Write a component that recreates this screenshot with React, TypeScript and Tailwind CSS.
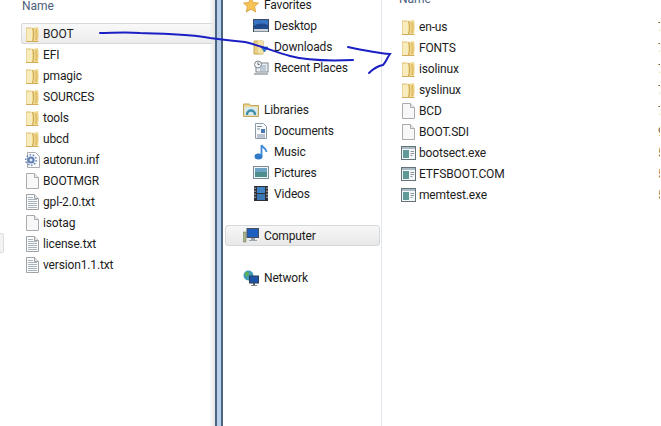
import type { ReactNode } from 'react';

function FolderIcon() {
  return (
    <svg width="13" height="16" viewBox="0 0 13 16" className="shrink-0">
      <path d="M0 1.5 h5 l1 1 h6 v12.5 h-12 z" fill="#dcbf70" />
      <path d="M0.5 2.5 h6 v12.5 h-6 z" fill="#f8ecbd" />
      <path d="M6 2 l6 -1 c1 4 1 9 0 14 h-6 z" fill="#f0d993" />
      <path d="M6.5 2 c1.6 4 1.6 8.5 0 13" stroke="#c9a654" strokeWidth="1" fill="none" />
      <path d="M0 15.5 h12.5" stroke="#d0ae5e" strokeWidth="1" />
      <path d="M10 3 c0.8 4 0.8 8 0 11" stroke="#e0c06a" strokeWidth="2" fill="none" />
    </svg>
  );
}

function BlankIcon() {
  return (
    <svg width="13" height="16" viewBox="0 0 13 16" className="shrink-0">
      <path d="M0.5 0.5 h8 l4 4 v11 h-12 z" fill="#f8f8f8" stroke="#a8acb0" />
      <path d="M8.5 0.5 v4 h4" fill="#ebebeb" stroke="#a8acb0" />
    </svg>
  );
}

function TextIcon() {
  return (
    <svg width="13" height="16" viewBox="0 0 13 16" className="shrink-0">
      <path d="M0.5 0.5 h8 l4 4 v11 h-12 z" fill="#fafafa" stroke="#9ea3a8" />
      <path d="M8.5 0.5 v4 h4" fill="#e8e8e8" stroke="#9ea3a8" />
      <path d="M2 3.5 h5 M2 5.5 h9 M2 7.5 h9 M2 9.5 h9 M2 11.5 h9 M2 13.5 h9" stroke="#a9b3bd" strokeWidth="1" />
    </svg>
  );
}

function InfIcon() {
  return (
    <svg width="15" height="16" viewBox="0 0 15 16" className="shrink-0">
      <path d="M2.5 0.5 h8 l4 4 v11 h-12 z" fill="#fafafa" stroke="#a9adb2" />
      <circle cx="6" cy="8" r="3.6" fill="#5f7fb5" />
      <circle cx="6" cy="8" r="5.2" fill="none" stroke="#6f8cbd" strokeWidth="1.6" strokeDasharray="1.6 1.6" />
      <circle cx="6" cy="8" r="1.5" fill="#dfe8f5" />
    </svg>
  );
}

function ExeIcon() {
  return (
    <svg width="15" height="14" viewBox="0 0 15 14" className="shrink-0">
      <rect x="0.5" y="0.5" width="14" height="13" fill="#f4f6f7" stroke="#64727a" />
      <rect x="1" y="1" width="13" height="2" fill="#a9bcc6" />
      <rect x="2" y="4" width="6" height="8" fill="#5f9a98" />
      <path d="M9.5 5.5 h3.5 M9.5 7.5 h3.5 M9.5 9.5 h2" stroke="#8b979e" />
    </svg>
  );
}

function StarIcon() {
  return (
    <svg width="16" height="16" viewBox="0 0 16 16" className="shrink-0">
      <path d="M8 0.5 l2.3 5 5.2 0.6 -3.9 3.5 1.1 5.4 -4.7 -2.7 -4.7 2.7 1.1 -5.4 -3.9 -3.5 5.2 -0.6 z" fill="#f6c455" stroke="#d79a3a" strokeWidth="0.8" />
    </svg>
  );
}

function DesktopIcon() {
  return (
    <svg width="16" height="13" viewBox="0 0 16 13" className="shrink-0">
      <rect x="0.5" y="0.5" width="15" height="12" fill="#3a74c4" stroke="#3a4c63" />
      <path d="M1 7 c4 -3 9 -3 14 -1 v6 h-14 z" fill="#1f4a8c" />
      <rect x="1" y="10" width="14" height="2.5" fill="#cfd5da" />
    </svg>
  );
}

function DownloadsIcon() {
  return (
    <svg width="16" height="16" viewBox="0 0 16 16" className="shrink-0">
      <path d="M1 2 h9 v13 h-9 z" fill="#e8cf85" stroke="#c7a858" />
      <path d="M5 1 l5 1 v13 l-5 -1 z" fill="#f3e2a6" />
      <path d="M8 8 h7 l-3.5 5 z" fill="#2f7fcf" stroke="#1d5c9f" strokeWidth="0.6" />
    </svg>
  );
}

function RecentIcon() {
  return (
    <svg width="16" height="16" viewBox="0 0 16 16" className="shrink-0">
      <rect x="3" y="3" width="12" height="9" fill="#eef1f4" stroke="#7d868e" />
      <circle cx="5" cy="4.5" r="3.5" fill="#f2f4f6" stroke="#7d868e" />
      <path d="M5 2.5 v2 h1.5" stroke="#566069" fill="none" />
      <path d="M7 6 h6 M7 8 h6 M7 10 h6" stroke="#8ba3bb" />
      <path d="M1 13 h14 v2 h-14 z" fill="#b3b8bd" />
    </svg>
  );
}

function LibrariesIcon() {
  return (
    <svg width="16" height="15" viewBox="0 0 16 15" className="shrink-0">
      <path d="M0.5 2 h6 l1 1.5 h8 v11 h-15 z" fill="#ecd690" stroke="#c3a65b" />
      <path d="M1.5 5 h13 v8.5 h-13 z" fill="#d8e9ef" />
      <path d="M4 13 c0 -6 8 -6 8 0" fill="none" stroke="#3f8fa8" strokeWidth="2.4" />
    </svg>
  );
}

function DocumentsIcon() {
  return (
    <svg width="14" height="16" viewBox="0 0 14 16" className="shrink-0">
      <path d="M1.5 0.5 h8 l3 3 v12 h-11 z" fill="#f8fafc" stroke="#8d9aa8" />
      <path d="M3 3.5 h5 M3 6 h3 M3 12 h8 M3 14 h8" stroke="#7c8fa6" />
      <rect x="7" y="6" width="4" height="4" fill="#4a78b5" />
    </svg>
  );
}

function MusicIcon() {
  return (
    <svg width="14" height="16" viewBox="0 0 14 16" className="shrink-0">
      <ellipse cx="4.5" cy="12.5" rx="4" ry="3" fill="#2f7bc8" />
      <path d="M7.5 12 V1 c1 3 5 3 5 7" fill="none" stroke="#3d8ad4" strokeWidth="1.8" />
    </svg>
  );
}

function PicturesIcon() {
  return (
    <svg width="16" height="13" viewBox="0 0 16 13" className="shrink-0">
      <rect x="0.5" y="0.5" width="15" height="12" fill="#f2f5f7" stroke="#7e8b95" />
      <rect x="2" y="2" width="12" height="4" fill="#6fa3c4" />
      <rect x="2" y="6" width="12" height="5" fill="#4e8f8d" />
    </svg>
  );
}

function VideosIcon() {
  return (
    <svg width="14" height="15" viewBox="0 0 14 15" className="shrink-0">
      <rect x="0" y="0" width="14" height="15" fill="#2d3036" />
      <rect x="3" y="1" width="8" height="6" fill="#3f83c4" />
      <rect x="3" y="8" width="8" height="6" fill="#3a77b3" />
      <path d="M1 1.5 v12 M13 1.5 v12" stroke="#d5d8dc" strokeWidth="1" strokeDasharray="1.5 1.5" />
    </svg>
  );
}

function ComputerIcon() {
  return (
    <svg width="16" height="15" viewBox="0 0 16 15" className="shrink-0">
      <rect x="0" y="4" width="3" height="10" fill="#a9b48a" stroke="#6f7a5c" strokeWidth="0.5" />
      <rect x="4" y="0.5" width="11.5" height="9" fill="#1f5fc0" stroke="#45515e" />
      <path d="M8 10 h4 v2 h2 v1 h-8 v-1 h2 z" fill="#9aa3ab" />
    </svg>
  );
}

function NetworkIcon() {
  return (
    <svg width="16" height="16" viewBox="0 0 16 16" className="shrink-0">
      <circle cx="5.5" cy="5.5" r="5" fill="#3f9bb8" />
      <path d="M2 3 c2 -2 4 -1 4 1 c0 2 -3 1 -3 4 z M7 8 c2 -1 3 0 3 1 l-2 1.5 z" fill="#5fb04d" />
      <rect x="6.5" y="6" width="9" height="7" fill="#1c55a8" stroke="#2f3f52" />
      <path d="M10 13 h2 v2 h2 v0.8 h-6 v-0.8 h2 z" fill="#55606b" />
    </svg>
  );
}

function Row({ icon, label, selected, date }: { icon: ReactNode; label: string; selected?: boolean; date?: string }) {
  return (
    <div
      className={
        'flex h-[21px] items-center border ' +
        (selected
          ? 'rounded-[2px] border-[#d6d9dc] bg-gradient-to-b from-[#f9f9f9] to-[#ececec]'
          : 'border-transparent')
      }
    >
      <span className="flex w-[15px] shrink-0 justify-center">{icon}</span>
      <span className="ml-[3px] grow text-[12px] tracking-[-0.15px] text-[#1c1c1c]">{label}</span>
      {date && <span className="w-[2px] overflow-hidden text-[12px] text-[#6d5a3c]">{date}</span>}
    </div>
  );
}

function NavRow({ icon, label, child, selected }: { icon: ReactNode; label: string; child?: boolean; selected?: boolean }) {
  return (
    <div
      className={
        'flex h-[21px] items-center rounded-[3px] border ' +
        (selected ? 'border-[#d5d8da] bg-gradient-to-b from-[#f7f7f7] to-[#e8e8e8] ' : 'border-transparent ') +
        (child ? 'pl-[27px]' : 'pl-[17px]')
      }
    >
      <span className="flex w-[16px] justify-center">{icon}</span>
      <span className="ml-[5px] text-[12px] tracking-[-0.15px] text-[#1c1c1c]">{label}</span>
    </div>
  );
}

export default function App() {
  return (
    <div className="relative flex h-[426px] w-[661px] overflow-hidden bg-white font-['Roboto',sans-serif]">
      {/* left file list */}
      <div className="relative w-[215px] shrink-0 pt-[23px]">
        <span className="absolute left-[22px] top-[-3px] text-[12px] text-[#4c607a]">Name</span>
        <div className="absolute left-0 top-[233px] h-[20px] w-[4px] rounded-r-[2px] border border-l-0 border-[#dcdcdc] bg-[#f3f3f3]" />
        <div className="ml-[21px] [&>div]:pl-[3px]">
          <Row icon={<FolderIcon />} label="BOOT" selected />
          <Row icon={<FolderIcon />} label="EFI" />
          <Row icon={<FolderIcon />} label="pmagic" />
          <Row icon={<FolderIcon />} label="SOURCES" />
          <Row icon={<FolderIcon />} label="tools" />
          <Row icon={<FolderIcon />} label="ubcd" />
          <Row icon={<InfIcon />} label="autorun.inf" />
          <Row icon={<BlankIcon />} label="BOOTMGR" />
          <Row icon={<TextIcon />} label="gpl-2.0.txt" />
          <Row icon={<BlankIcon />} label="isotag" />
          <Row icon={<TextIcon />} label="license.txt" />
          <Row icon={<TextIcon />} label="version1.1.txt" />
        </div>
        {/* soft shadow next to the window edge */}
        <div className="absolute right-0 top-0 h-full w-[6px] bg-gradient-to-r from-transparent to-[#e6e6e6]" />
      </div>

      {/* window edge */}
      <div className="h-full w-[8px] shrink-0 border-x-2 border-[#4d6480] bg-[#b9d0ec]" />

      {/* navigation pane */}
      <div className="w-[159px] shrink-0 border-r border-[#dfe6ee] pr-[1px]">
        <div className="ml-[2px] mt-[-6px]">
          <NavRow icon={<StarIcon />} label="Favorites" />
          <NavRow icon={<DesktopIcon />} label="Desktop" child />
          <NavRow icon={<DownloadsIcon />} label="Downloads" child />
          <NavRow icon={<RecentIcon />} label="Recent Places" child />
          <div className="h-[21px]" />
          <NavRow icon={<LibrariesIcon />} label="Libraries" />
          <NavRow icon={<DocumentsIcon />} label="Documents" child />
          <NavRow icon={<MusicIcon />} label="Music" child />
          <NavRow icon={<PicturesIcon />} label="Pictures" child />
          <NavRow icon={<VideosIcon />} label="Videos" child />
          <div className="h-[21px]" />
          <NavRow icon={<ComputerIcon />} label="Computer" selected />
          <div className="h-[21px]" />
          <NavRow icon={<NetworkIcon />} label="Network" />
        </div>
      </div>

      {/* right file list */}
      <div className="relative grow pl-[18px] pt-[16px]">
        <span className="absolute left-[17px] top-[-10px] text-[12px] text-[#4c607a]">Name</span>
        <Row icon={<FolderIcon />} label="en-us" date="7" />
        <Row icon={<FolderIcon />} label="FONTS" date="7" />
        <Row icon={<FolderIcon />} label="isolinux" date="7" />
        <Row icon={<FolderIcon />} label="syslinux" date="7" />
        <Row icon={<BlankIcon />} label="BCD" date="7" />
        <Row icon={<BlankIcon />} label="BOOT.SDI" date="9" />
        <Row icon={<ExeIcon />} label="bootsect.exe" date="5" />
        <Row icon={<ExeIcon />} label="ETFSBOOT.COM" date="5" />
        <Row icon={<ExeIcon />} label="memtest.exe" date="5" />
      </div>

      {/* hand drawn marker strokes */}
      <svg className="pointer-events-none absolute left-0 top-0" width="661" height="426" fill="none">
        <path
          d="M100 33 C112 33 125 32 140 33 C165 34 190 34 210 38 C225 40 235 41 245 42 C262 46 275 52 290 56 C305 60 330 61 353 60"
          stroke="#1a1fc4"
          strokeWidth="2"
          strokeLinecap="round"
        />
        <path
          d="M348 47 C362 50 376 53 390 54 C387 58 386 62 383 65 C378 66 373 69 369 73"
          stroke="#1a1fc4"
          strokeWidth="2"
          strokeLinecap="round"
        />
      </svg>
    </div>
  );
}
